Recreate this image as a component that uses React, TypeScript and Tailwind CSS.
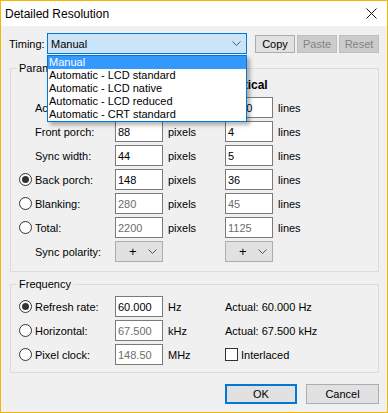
import type { ReactNode } from "react";

const font = { fontFamily: '"Liberation Sans", Arial, sans-serif' };

function Radio({ checked = false }: { checked?: boolean }) {
  return (
    <span className="flex h-[13px] w-[13px] items-center justify-center rounded-full border border-[#333333] bg-white">
      {checked && <span className="h-[7px] w-[7px] rounded-full bg-[#333333]" />}
    </span>
  );
}

function Field({ value, dim = false }: { value: string; dim?: boolean }) {
  return (
    <div
      className={`flex h-[21px] w-[48px] items-center border border-[#7a7a7a] bg-white pl-[2px] ${
        dim ? "text-[#6d6d6d]" : "text-black"
      }`}
    >
      {value}
    </div>
  );
}

function Chevron() {
  return (
    <svg width="9" height="5" viewBox="0 0 9 5">
      <polyline points="0.5,0.5 4.5,4.5 8.5,0.5" fill="none" stroke="#555555" strokeWidth="1" />
    </svg>
  );
}

function Polarity() {
  return (
    <div className="flex h-[21px] w-[48px] items-center border border-[#adadad] bg-[#e1e1e1] pl-[13px] pr-[5px]">
      <span className="flex-1 text-[13px]">+</span>
      <Chevron />
    </div>
  );
}

type ParamRow = {
  label: string;
  radio?: boolean;
  checked?: boolean;
  h: string;
  v: string;
  dim?: boolean;
};

const params: ParamRow[] = [
  { label: "Active:", h: "1920", v: "1080" },
  { label: "Front porch:", h: "88", v: "4" },
  { label: "Sync width:", h: "44", v: "5" },
  { label: "Back porch:", radio: true, checked: true, h: "148", v: "36" },
  { label: "Blanking:", radio: true, h: "280", v: "45", dim: true },
  { label: "Total:", radio: true, h: "2200", v: "1125", dim: true },
];

const timings = [
  "Manual",
  "Automatic - LCD standard",
  "Automatic - LCD native",
  "Automatic - LCD reduced",
  "Automatic - CRT standard",
];

function Group({ title, children, className }: { title: string; children: ReactNode; className: string }) {
  return (
    <fieldset className={`ml-[9px] w-[369px] border border-[#dcdcdc] pl-[8px] ${className}`}>
      <legend className="-ml-[2px] px-[2px] text-[11px] leading-[16px]">{title}</legend>
      {children}
    </fieldset>
  );
}

export default function App() {
  return (
    <div
      className="relative flex h-[413px] w-[388px] flex-col border border-[#f2b705] bg-[#f0f0f0] text-[11px] leading-[16px] text-black"
      style={font}
    >
      <div className="flex h-[25px] items-center justify-between bg-white pl-[4px] pr-[10px]">
        <span className="text-[12px]">Detailed Resolution</span>
        <svg width="11" height="11" viewBox="0 0 11 11">
          <path d="M0.5 0.5 L10.5 10.5 M10.5 0.5 L0.5 10.5" stroke="#111111" strokeWidth="1" />
        </svg>
      </div>

      <div className="mt-[7px] flex h-[21px] items-center pl-[8px]">
        <span className="w-[38px]">Timing:</span>
        <div className="flex h-[21px] w-[200px] items-center border border-[#0078d7] bg-[#cce4f7] pl-[3px] pr-[5px]">
          <span className="flex-1">Manual</span>
          <Chevron />
        </div>
        <div className="ml-[8px] flex gap-[2px]">
          <div className="flex h-[18px] w-[40px] items-center justify-center border border-[#adadad] bg-[#e1e1e1]">
            Copy
          </div>
          <div className="flex h-[18px] w-[40px] items-center justify-center border border-[#bfbfbf] bg-[#cccccc] text-[#838383]">
            Paste
          </div>
          <div className="flex h-[18px] w-[40px] items-center justify-center border border-[#bfbfbf] bg-[#cccccc] text-[#838383]">
            Reset
          </div>
        </div>
      </div>

      <Group title="Parameters" className="mt-[6px] pb-[9px]">
        <div className="mt-[1px] flex text-[12px] font-bold">
          <span className="w-[96px]" />
          <span className="w-[110px]">Horizontal</span>
          <span>Vertical</span>
        </div>
        <div className="mt-[4px] flex flex-col gap-[3px]">
          {params.map((row) => (
            <div className="flex h-[21px] items-center" key={row.label}>
              <span className="w-[16px]">{row.radio && <Radio checked={row.checked} />}</span>
              <span className="w-[80px]">{row.label}</span>
              <Field value={row.h} dim={row.dim} />
              <span className="w-[62px] pl-[5px]">pixels</span>
              <Field value={row.v} dim={row.dim} />
              <span className="pl-[5px]">lines</span>
            </div>
          ))}
          <div className="flex h-[21px] items-center">
            <span className="w-[16px]" />
            <span className="w-[80px]">Sync polarity:</span>
            <Polarity />
            <span className="w-[62px]" />
            <Polarity />
          </div>
        </div>
      </Group>

      <Group title="Frequency" className="mt-[4px] pb-[7px]">
        <div className="mt-[4px] flex flex-col gap-[3px]">
          <div className="flex h-[21px] items-center">
            <span className="w-[16px]">
              <Radio checked />
            </span>
            <span className="w-[80px]">Refresh rate:</span>
            <Field value="60.000" />
            <span className="w-[62px] pl-[5px]">Hz</span>
            <span>Actual: 60.000 Hz</span>
          </div>
          <div className="flex h-[21px] items-center">
            <span className="w-[16px]">
              <Radio />
            </span>
            <span className="w-[80px]">Horizontal:</span>
            <Field value="67.500" dim />
            <span className="w-[62px] pl-[5px]">kHz</span>
            <span>Actual: 67.500 kHz</span>
          </div>
          <div className="flex h-[21px] items-center">
            <span className="w-[16px]">
              <Radio />
            </span>
            <span className="w-[80px]">Pixel clock:</span>
            <Field value="148.50" dim />
            <span className="w-[62px] pl-[5px]">MHz</span>
            <span className="h-[13px] w-[13px] border border-[#333333] bg-white" />
            <span className="pl-[3px]">Interlaced</span>
          </div>
        </div>
      </Group>

      <div className="mt-[11px] flex gap-[9px] pl-[224px]">
        <div className="flex h-[20px] w-[72px] items-center justify-center border-2 border-[#0078d7] bg-[#e1e1e1]">
          OK
        </div>
        <div className="flex h-[20px] w-[73px] items-center justify-center border border-[#adadad] bg-[#e1e1e1]">
          Cancel
        </div>
      </div>

      <div className="absolute left-[46px] top-[54px] flex w-[200px] flex-col border border-[#0078d7] bg-white shadow-[3px_3px_4px_rgba(0,0,0,0.3)]">
        {timings.map((item, i) => (
          <div
            className={`h-[13px] pl-[1px] leading-[13px] ${i === 0 ? "bg-[#3399ff] text-white" : "text-black"}`}
            key={item}
          >
            {item}
          </div>
        ))}
      </div>
    </div>
  );
}
